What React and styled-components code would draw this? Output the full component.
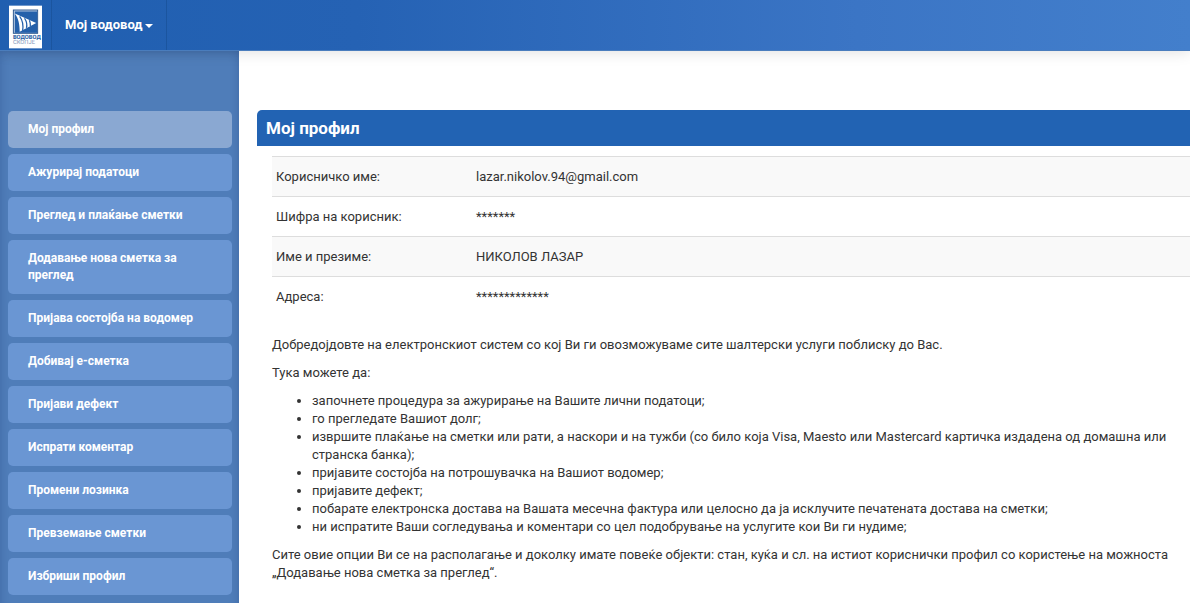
import React from "react";
import styled, { createGlobalStyle } from "styled-components";

const GlobalStyle = createGlobalStyle`
  *, *::before, *::after { box-sizing: border-box; }
  body {
    margin: 0;
    background: #fff;
    color: #333;
    font-family: Roboto, "Liberation Sans", sans-serif;
    font-size: 13px;
    line-height: 18px;
  }
`;

const Page = styled.div`
  display: flex;
  flex-direction: column;
  min-height: 100vh;
`;

const Navbar = styled.header`
  display: flex;
  height: 51px;
  background: linear-gradient(90deg, #205fb0 0%, #2562b4 30%, #3b75c5 72%, #437fcc 100%);
  border-bottom: 1px solid #4a7dbd;
  box-shadow: 0 1px 14px rgba(0, 0, 0, 0.13);
  z-index: 1;
`;

const Brand = styled.a`
  display: flex;
  align-items: flex-start;
  width: 52px;
  padding: 5px 9px 0;
  border-right: 1px solid #1b559f;
`;

const Nav = styled.nav`
  display: flex;
  border-right: 1px solid #1b559f;
`;

const NavButton = styled.button`
  display: flex;
  align-items: center;
  gap: 2px;
  padding: 0 13px;
  border: 0;
  background: none;
  color: #fff;
  font: bold 13px/18px Roboto, "Liberation Sans", sans-serif;
  cursor: pointer;
`;

const Caret = styled.span`
  border: 4px solid transparent;
  border-top-color: #fff;
  border-bottom-width: 0;
  margin-top: 2px;
`;

const Body = styled.div`
  display: flex;
  flex: 1;
`;

const Sidebar = styled.aside`
  flex: none;
  width: 239px;
  padding: 60px 7px 8px 8px;
  background: #4f7db9;
  box-shadow: inset 0 0 10px rgba(0, 30, 90, 0.22);
`;

const Menu = styled.ul`
  display: flex;
  flex-direction: column;
  gap: 6px;
  margin: 0;
  padding: 0;
  list-style: none;
`;

const MenuLink = styled.a`
  display: block;
  padding: 10px 20px;
  border-radius: 5px;
  background: ${(p) => (p.$active ? "#8aa8d2" : "#6a96d3")};
  color: #fff;
  font-size: 12px;
  font-weight: bold;
  line-height: 17px;
  text-decoration: none;
`;

const Main = styled.main`
  flex: 1;
  min-width: 0;
  padding: 59px 0 20px 18px;
`;

const Title = styled.h1`
  margin: 0;
  padding: 8px 9px;
  border-radius: 5px 0 0 0;
  background: #2263b3;
  color: #fff;
  font-size: 17px;
  font-weight: bold;
  line-height: 20px;
`;

const Content = styled.div`
  padding: 10px 0 0 15px;
`;

const Details = styled.table`
  width: 100%;
  margin-bottom: 20px;
  border-collapse: collapse;
  table-layout: fixed;
`;

const Row = styled.tr`
  border-top: 1px solid #ddd;
  &:nth-child(odd) { background: #f9f9f9; }
`;

const Label = styled.th`
  width: 200px;
  padding: 11px 4px 10px;
  font-weight: normal;
  text-align: left;
`;

const Value = styled.td`
  padding: 11px 4px 10px;
`;

const Text = styled.section`
  padding-right: 15px;
`;

const Paragraph = styled.p`
  margin: 0 0 10px;
`;

const List = styled.ul`
  margin: 0 0 10px;
  padding: 0 0 0 40px;
`;

const menu = [
  "Мој профил",
  "Ажурирај податоци",
  "Преглед и плаќање сметки",
  "Додавање нова сметка за преглед",
  "Пријава состојба на водомер",
  "Добивај е-сметка",
  "Пријави дефект",
  "Испрати коментар",
  "Промени лозинка",
  "Превземање сметки",
  "Избриши профил",
];

const details = [
  ["Корисничко име:", "lazar.nikolov.94@gmail.com"],
  ["Шифра на корисник:", "*******"],
  ["Име и презиме:", "НИКОЛОВ ЛАЗАР"],
  ["Адреса:", "*************"],
];

const services = [
  "започнете процедура за ажурирање на Вашите лични податоци;",
  "го прегледате Вашиот долг;",
  "извршите плаќање на сметки или рати, а наскори и на тужби (со било која Visa, Maesto или Mastercard картичка издадена од домашна или странска банка);",
  "пријавите состојба на потрошувачка на Вашиот водомер;",
  "пријавите дефект;",
  "побарате електронска достава на Вашата месечна фактура или целосно да ја исклучите печатената достава на сметки;",
  "ни испратите Ваши согледувања и коментари со цел подобрување на услугите кои Ви ги нудиме;",
];

function Logo() {
  return (
    <svg width="34" height="44" viewBox="0 0 34 44" role="img" aria-label="Водовод Скопје">
      <rect width="34" height="44" fill="#fff" />
      <rect x="4.5" y="4.5" width="25" height="24" fill="#b9cbe4" stroke="#2d588f" />
      <path d="M6 6H29V28H6Z" fill="#2460aa" />
      <path d="M6 8L28 18L11 27C11 20 10 13 6 8Z" fill="#fff" />
      <path
        d="M11 11C14 15 15 20 14 26M16 13C18 16 19 19 18 23M21 15C22 17 22 19 22 21"
        fill="none"
        stroke="#2460aa"
        strokeWidth="1.3"
      />
      <text x="4" y="34" fontFamily="Roboto, sans-serif" fontSize="6" fontWeight="700" fill="#245a9f" textRendering="geometricPrecision">
        ВОДОВОД
      </text>
      <text x="4" y="39" fontFamily="Roboto, sans-serif" fontSize="6" fill="#7f97b9" textRendering="geometricPrecision">
        СКОПЈЕ
      </text>
    </svg>
  );
}

export default function App() {
  return (
    <>
      <GlobalStyle />
      <Page>
        <Navbar>
          <Brand href="#"><Logo /></Brand>
          <Nav>
            <NavButton type="button">Мој водовод<Caret /></NavButton>
          </Nav>
        </Navbar>
        <Body>
          <Sidebar>
            <Menu>
              {menu.map((item, i) => (
                <li key={item}>
                  <MenuLink href="#" $active={i === 0}>{item}</MenuLink>
                </li>
              ))}
            </Menu>
          </Sidebar>
          <Main>
            <Title>Мој профил</Title>
            <Content>
              <Details>
                <tbody>
                  {details.map(([label, value]) => (
                    <Row key={label}>
                      <Label scope="row">{label}</Label>
                      <Value>{value}</Value>
                    </Row>
                  ))}
                </tbody>
              </Details>
              <Text>
                <Paragraph>
                  Добредојдовте на електронскиот систем со кој Ви ги овозможуваме сите шалтерски услуги поблиску до Вас.
                </Paragraph>
                <Paragraph>Тука можете да:</Paragraph>
                <List>
                  {services.map((s) => <li key={s}>{s}</li>)}
                </List>
                <Paragraph>
                  Сите овие опции Ви се на располагање и доколку имате повеќе објекти: стан, куќа и сл. на истиот кориснички профил со користење на можноста „Додавање нова сметка за преглед“.
                </Paragraph>
              </Text>
            </Content>
          </Main>
        </Body>
      </Page>
    </>
  );
}
